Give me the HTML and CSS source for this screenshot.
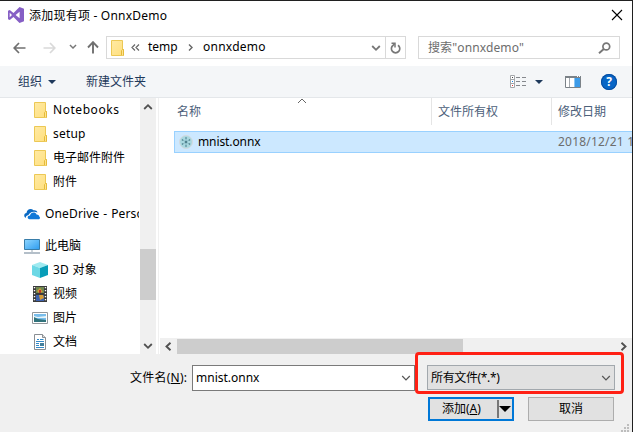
FILE: index.html
```html
<!DOCTYPE html>
<html lang="zh-CN">
<head>
<meta charset="utf-8">
<title>添加现有项 - OnnxDemo</title>
<link rel="stylesheet" href="styles.css">
</head>
<body>
<svg class="defs" width="0" height="0">
  <defs>
    <linearGradient id="fold" x1="0" y1="0" x2="1" y2="1"><stop offset="0" stop-color="#ffeaa4"/><stop offset="1" stop-color="#ffdf7d"/></linearGradient>
    <linearGradient id="screen" x1="0" y1="0" x2="1" y2="1"><stop offset="0" stop-color="#8fd6ff"/><stop offset="1" stop-color="#2d9cf0"/></linearGradient>
    <symbol id="folder" viewBox="0 0 13 16"><path d="M.5.500h11v9h1v6H.5z" fill="url(#fold)" stroke="#ecc855"/><path d="M10.500 15V10.500l1-1h1v6" fill="#ffe48d" stroke="#e5ba3b"/></symbol>
    <symbol id="down" viewBox="0 0 10 8"><path d="M1.200 2 5 5.800 8.800 2" fill="none" stroke="currentColor" stroke-width="var(--w,1.8)"/></symbol>
  </defs>
</svg>
<div class="dialog">
  <header class="titlebar">
    <svg class="vs" width="16" height="16" viewBox="0 0 16 16"><path fill="#865fc5" fill-rule="evenodd" d="M11.500 0 16 1.800v12.400L11.500 16 5.500 10 1.800 13 0 12.200V3.800L1.800 3l3.700 3zM11.600 4.800 7.600 8l4 3.200zM1.700 5.700v4.600L4 8z"/></svg>
    <h1 class="title">添加现有项 - OnnxDemo</h1>
    <svg class="close" width="12" height="12" viewBox="0 0 12 12"><path d="m1 1 10 10M11 1 1 11" stroke="#000" stroke-width="1.100"/></svg>
  </header>

  <nav class="navbar">
    <svg class="back" width="13" height="12" viewBox="0 0 13 12"><path d="M6 1 1.200 6 6 11M1.500 6H12.500" fill="none" stroke="#707070" stroke-width="1.700"/></svg>
    <svg class="forward" width="13" height="12" viewBox="0 0 13 12"><path d="m7 1 4.800 5L7 11M11.500 6H.5" fill="none" stroke="#d9d9d9" stroke-width="1.700"/></svg>
    <svg class="recent" width="8" height="7"><use href="#down"/></svg>
    <svg class="up" width="12" height="13" viewBox="0 0 12 13"><path d="M1 6.500 6 1.200l5 5.300M6 1.500V12.500" fill="none" stroke="#707070" stroke-width="1.900"/></svg>
    <div class="address">
      <svg class="folder" width="13" height="16"><use href="#folder"/></svg>
      <svg class="chevs" width="9" height="7" viewBox="0 0 9 7"><path d="M4 .5 1 3.500l3 3M8 .5 5 3.500l3 3" fill="none" stroke="#666" stroke-width="1.200"/></svg>
      <span class="crumb temp">temp</span>
      <svg class="sep" width="5" height="7" viewBox="0 0 5 7"><path d="m1 .5 3 3-3 3" fill="none" stroke="#666" stroke-width="1.400"/></svg>
      <span class="crumb onnx">onnxdemo</span>
      <svg class="drop" width="10" height="8"><use href="#down"/></svg>
      <span class="refresh"><svg width="11" height="12" viewBox="0 0 11 12"><path d="M8 3.200A4.200 4.200 0 1 1 3.200 3.200L4.500 2" fill="none" stroke="#777" stroke-width="1.700"/><path d="M1.500 1.200H5V5.500" fill="none" stroke="#777" stroke-width="1.500"/></svg></span>
    </div>
    <div class="search">
      <span class="query">搜索"onnxdemo"</span>
      <svg width="13" height="12" viewBox="0 0 13 12"><circle cx="8.300" cy="4.500" r="3.400" fill="none" stroke="#777" stroke-width="1.700"/><path d="M5.800 7 1 11.300" stroke="#777" stroke-width="1.900"/></svg>
    </div>
  </nav>

  <div class="toolbar">
    <span class="organize">组织</span><i class="caret"></i>
    <span class="newdir">新建文件夹</span>
    <svg class="view" width="17" height="13" viewBox="0 0 17 13"><path d="M.5.500h4v12h-4zM.5 4.500h4M.5 8.500h4" fill="#fff" stroke="#a4a7ab"/><path d="M2 2h1v1H2z" fill="#444"/><path d="M2 6h1v1H2z" fill="#1688e8"/><path d="M2 10h1v1H2z" fill="#d33"/><path d="M6 2.500h4m2 0h4M6 6.500h4m2 0h4M6 10.500h4m2 0h4" stroke="#85888d"/></svg>
    <i class="caret"></i>
    <svg class="pane" width="16" height="12" viewBox="0 0 16 12"><path d="M.5.500h15v11H.5z" fill="#fff" stroke="#7b8288"/><path d="M0 0h16v2H0z" fill="#7b8288"/><path d="M4.500 2v9" stroke="#a3a8ad"/><path d="M9 2h6v9H9z" fill="#8cc6f3"/><path d="M10 2h5v9h-5z" fill="#3d9be8"/><path d="M12 0h1v1h-1zM14 0h1v1h-1z" fill="#fff"/></svg>
    <span class="help">?</span>
  </div>

  <main class="content">
    <aside class="tree">
      <ul>
        <li><svg class="ic f" width="13" height="16"><use href="#folder"/></svg><span class="nb">Notebooks</span></li>
        <li><svg class="ic f" width="13" height="16"><use href="#folder"/></svg><span class="su">setup</span></li>
        <li><svg class="ic f" width="13" height="16"><use href="#folder"/></svg><span>电子邮件附件</span></li>
        <li><svg class="ic f" width="13" height="16"><use href="#folder"/></svg><span>附件</span></li>
        <li class="root cloud"><svg class="ic" width="16" height="16" viewBox="0 0 16 16"><path d="M2 12C-.8 11 0 7 2.500 7 3 3 7 2 9.500 4.300 11 3.800 13 4.500 13.500 6.500 8 4.500 5 7.500 4.500 9 2 9.500 1.500 11.500 2 12z" fill="#0a6ac4"/><path d="M5.500 13.300C2.500 12.500 3.500 9.500 6 9.500c.5-3.500 5.500-4 6.500-1 2 0 2.700 1 2.700 2 1.200.6.900 2.500-.2 2.800z" fill="#0f78d8"/></svg><span class="od">OneDrive - Perso</span></li>
        <li class="root pc"><svg class="ic" width="16" height="16" viewBox="0 0 16 16"><path d="M.5 1.500h15v10H.5z" fill="url(#screen)" stroke="#397da9"/><path d="M7 12h2v2H7z" fill="#ccd4da"/><path d="M0 15h16" stroke="#8295a5" stroke-width="1.200"/></svg><span>此电脑</span></li>
        <li><svg class="ic" width="16" height="16" viewBox="0 0 16 16"><path d="m0 3 8-3 8 3-8 3z" fill="#9feaf0"/><path d="M8 6 16 3v10l-8 3z" fill="#079db8"/><path d="M0 3 8 6v10l-8-3z" fill="#6cd8e5"/></svg><span class="td">3D 对象</span></li>
        <li><svg class="ic" width="16" height="16" viewBox="0 0 16 16"><path d="M1 0h14v16H1z" fill="#3b3b3b"/><path d="M4 1h8v6H4z" fill="#70884f"/><path d="M4 9h8v6H4z" fill="#3e62ad"/><path d="m5 5 3-3 3 4-4 1zM7 9h4l1 3-4 2z" fill="#d69c36"/><path d="M7 4h2v3H7z" fill="#bb3a2b"/><path d="M2.500 1v15M13.500 1v15" stroke="#fff" stroke-width="1.400" stroke-dasharray="1.300 1.700"/></svg><span>视频</span></li>
        <li><svg class="ic" width="16" height="16" viewBox="0 0 16 16"><path d="M.5 2.500h15v11H.5z" fill="#fff" stroke="#92979b"/><path d="M2 4h12v8H2z" fill="#79bdeb"/><path d="m2 6 4 1 8-1v2H2z" fill="#e7f4f8"/><path d="m2 7 4 2 8 1v2H2z" fill="#31737b"/></svg><span>图片</span></li>
        <li><svg class="ic" width="16" height="16" viewBox="0 0 16 16"><path d="M2.500.5h8l3 3v12h-11z" fill="#fff" stroke="#898e93"/><path d="M10.500.5v3h3" fill="#ddd" stroke="#898e93"/><path d="M5 5.500h2m1 0h3.500M4 7.500h8M4 9.500h3m1 0h4M4 11.500h3m1 0h4M4 13.500h8" stroke="#348ac8"/><path d="M8 9h4v3H8z" fill="#437f9b"/></svg><span>文档</span></li>
      </ul>
    </aside>
    <div class="vscroll">
      <svg class="arrow flip" width="10" height="8"><use href="#down"/></svg>
      <i class="thumb"></i>
      <svg class="arrow" width="10" height="8"><use href="#down"/></svg>
    </div>
    <section class="files">
      <div class="head">
        <div class="col name">名称<svg class="sort" width="10" height="6" viewBox="0 0 10 6"><path d="M1 5 5 1l4 4" fill="none" stroke="#666"/></svg></div>
        <div class="col own">文件所有权</div>
        <div class="col date">修改日期</div>
      </div>
      <div class="row">
        <svg width="14" height="14" viewBox="0 0 14 14"><circle cx="7" cy="7" r="6.500" fill="#a9d8e0" stroke="#d4dadf"/><path d="M7 2.500v9M3 4.500l8 5M11 4.500l-8 5" stroke="#7fb0bd" stroke-width=".8"/><g fill="#4f7f8d"><circle cx="7" cy="3" r=".8"/><circle cx="7" cy="11" r=".8"/><circle cx="3.500" cy="5" r=".8"/><circle cx="10.500" cy="5" r=".8"/><circle cx="3.500" cy="9" r=".8"/><circle cx="10.500" cy="9" r=".8"/><circle cx="7" cy="7" r="1.200"/></g></svg>
        <span class="fname">mnist.onnx</span>
        <span class="when">2018/12/21 1</span>
      </div>
      <div class="hscroll">
        <svg width="7" height="9" viewBox="0 0 7 9"><path d="m5.500.8-4 3.700 4 3.700" fill="none" stroke="#505050" stroke-width="1.900"/></svg>
        <i class="hthumb"></i>
        <svg width="7" height="9" viewBox="0 0 7 9"><path d="m1.500.8 4 3.700-4 3.700" fill="none" stroke="#505050" stroke-width="1.900"/></svg>
      </div>
    </section>
  </main>

  <footer class="footer">
    <div class="fields">
      <label class="label">文件名(<u>N</u>):</label>
      <div class="combo"><span class="value">mnist.onnx</span><svg class="thin" width="10" height="8"><use href="#down"/></svg></div>
      <div class="filter"><span class="kind">所有文件(*.*)</span><svg class="thin" width="10" height="8"><use href="#down"/></svg></div>
    </div>
    <div class="actions">
      <div class="add"><span class="addtext">添加(<u>A</u>)</span><i class="split"></i><i class="tri"></i></div>
      <div class="cancel">取消</div>
    </div>
    <div class="mark"></div>
    <svg class="grip" width="8" height="8" viewBox="0 0 8 8"><path d="M6 0h2v2H6zM3 3h2v2H3zM6 3h2v2H6zM0 6h2v2H0zM3 6h2v2H3zM6 6h2v2H6z" fill="#bdbdbd"/></svg>
  </footer>
</div>
</body>
</html>
```

FILE: styles.css
```css
* { box-sizing: border-box; }
body { margin: 0; background: #fff; font: 12px/16px "Noto Sans", "Noto Sans CJK SC", sans-serif; color: #000; overflow: hidden; }
svg { display: block; flex: none; }
span, label { white-space: nowrap; flex: none; }
i { display: block; flex: none; }
.defs { position: absolute; }
.dialog { width: 633px; height: 432px; display: flex; flex-direction: column; border-top: 1px solid #202020; border-right: 1px solid #202020; background: #fff; }

.titlebar { height: 34px; flex: none; display: flex; padding: 6px 9px 0 8px; }
.title { margin: 1px auto 0 5px; font-size: 12px; line-height: 16px; font-weight: 400; letter-spacing: .22px; }
.close { margin-top: 2px; }

.navbar { height: 31px; flex: none; display: flex; align-items: flex-start; padding: 1px 12px 0 13px; color: #777; }
.back, .forward { margin-top: 6px; }
.forward { margin-left: 17px; }
.recent { margin: 7px 0 0 13px; }
.up { margin: 5px 0 0 10px; }
.address, .search { height: 23px; border: 1px solid #d9d9d9; display: flex; align-items: center; }
.address { width: 300px; margin-left: 7px; padding-left: 4px; }
.chevs { margin-left: 7px; }
.crumb { color: #000; line-height: 14px; padding-bottom: 2px; }
.temp { width: 30px; margin-left: 8px; }
.sep { margin-left: 10px; }
.onnx { margin: 0 auto 0 10px; letter-spacing: .25px; }
.drop { margin-right: 4px; }
.refresh { width: 20px; height: 21px; border-left: 1px solid #d9d9d9; display: flex; align-items: center; justify-content: center; }
.search { width: 202px; margin-left: 12px; padding: 0 8px 0 9px; justify-content: space-between; color: #6d6d6d; }
.query { letter-spacing: .12px; }

.toolbar { height: 32px; flex: none; display: flex; align-items: center; background: #f4f6f8; border-bottom: 1px solid #e4e7ea; padding-left: 18px; color: #1e395b; }
.caret { width: 0; height: 0; border: 4px solid transparent; border-top-color: #1e395b; border-bottom: 0; }
.organize { margin-right: 6px; }
.newdir { margin-left: 30px; }
.view { margin: 0 8px 0 auto; }
.pane { margin-left: 22px; }
.help { width: 16px; height: 16px; margin: 0 15px 0 20px; border-radius: 50%; background: #0866c6; box-shadow: inset 0 0 0 1px #074da0; color: #fff; font-weight: 700; text-align: center; }

.content { height: 256px; flex: none; display: flex; }
.tree { width: 140px; padding-right: 1px; overflow: hidden; flex: none; }
.tree ul { list-style: none; margin: 0; padding: 0; width: 139px; overflow: hidden; }
.tree li { height: 24px; display: flex; align-items: center; padding-left: 32px; }
.tree li .ic { margin-right: 5px; }
.tree li .f { margin: 0 6px 0 2px; }
.tree li.root { padding-left: 24px; }
.cloud { margin-top: 8px; }
.pc { margin-top: 8px; }
.nb { letter-spacing: .55px; }
.su { letter-spacing: .2px; }
.od { letter-spacing: .15px; word-spacing: .6px; }
.td { letter-spacing: .25px; }
.vscroll { width: 16px; height: 256px; flex: none; background: #f0f0f0; display: flex; flex-direction: column; align-items: center; color: #505050; }
.flip { transform: scaleY(-1); margin-top: 5px; }
.thumb { width: 16px; height: 51px; margin-top: 138px; background: #cdcdcd; }
.vscroll .arrow:last-child { margin: auto 0 4px; }
.files { width: 474px; flex: none; margin-left: 2px; border-left: 1px solid #f0f0f0; display: flex; flex-direction: column; overflow: hidden; }
.head { height: 27px; display: flex; line-height: 27px; color: #4c607a; }
.col { border-right: 1px solid #e5e5e5; flex: none; }
.name { width: 273px; padding-left: 18px; position: relative; }
.sort { position: absolute; left: 138px; top: 0; }
.own { width: 120px; padding-left: 6px; }
.date { width: 80px; padding-left: 6px; border: 0; }
.row { height: 22px; margin: 6px 0 0 15px; display: flex; align-items: center; background: #cce8ff; border: 1px solid #99d1ff; border-right: 0; padding-left: 4px; flex: none; overflow: hidden; }
.fname { margin-left: 5px; width: 360px; letter-spacing: -.1px; }
.when { color: #6d6d6d; letter-spacing: .2px; }
.hscroll { height: 16px; margin: auto 0 0 1px; background: #f0f0f0; display: flex; align-items: center; padding: 0 5px; }
.hthumb { width: 286px; height: 15px; margin: 0 auto 0 5px; background: #cdcdcd; }

.footer { flex: 1; background: #f0f0f0; position: relative; padding-top: 11px; }
.fields { display: flex; height: 26px; padding-left: 130px; }
.label { width: 62px; line-height: 26px; letter-spacing: .25px; }
.thin { --w: 1.2; color: #555; }
.combo { width: 223px; height: 26px; display: flex; align-items: center; justify-content: space-between; padding: 0 3px 0 3px; border: 1px solid #7a7a7a; background: #fff; }
.filter { width: 188px; height: 25px; margin-left: 12px; display: flex; align-items: center; justify-content: space-between; padding: 0 3px 0 3px; border: 1px solid #a2a8ad; background: #e1e1e1; }
.kind { letter-spacing: -.35px; }
.actions { display: flex; margin-top: 6px; padding-left: 428px; }
.add { width: 86px; height: 24px; border: 2px solid #0078d7; background: #e1e1e1; display: flex; align-items: center; }
.addtext { margin-left: 12px; width: 55px; }
.split { width: 2px; height: 18px; background: #777; }
.tri { margin-left: 0; border: 6px solid transparent; border-top-color: #000; border-bottom: 0; }
.cancel { width: 86px; height: 24px; margin-left: 14px; border: 1px solid #adadad; background: #e1e1e1; text-align: center; line-height: 22px; }
.mark { position: absolute; left: 415px; top: -2px; width: 209px; height: 42px; border: 3px solid #ff2014; border-radius: 4px; }
.grip { position: absolute; right: 3px; bottom: 0; }
```
